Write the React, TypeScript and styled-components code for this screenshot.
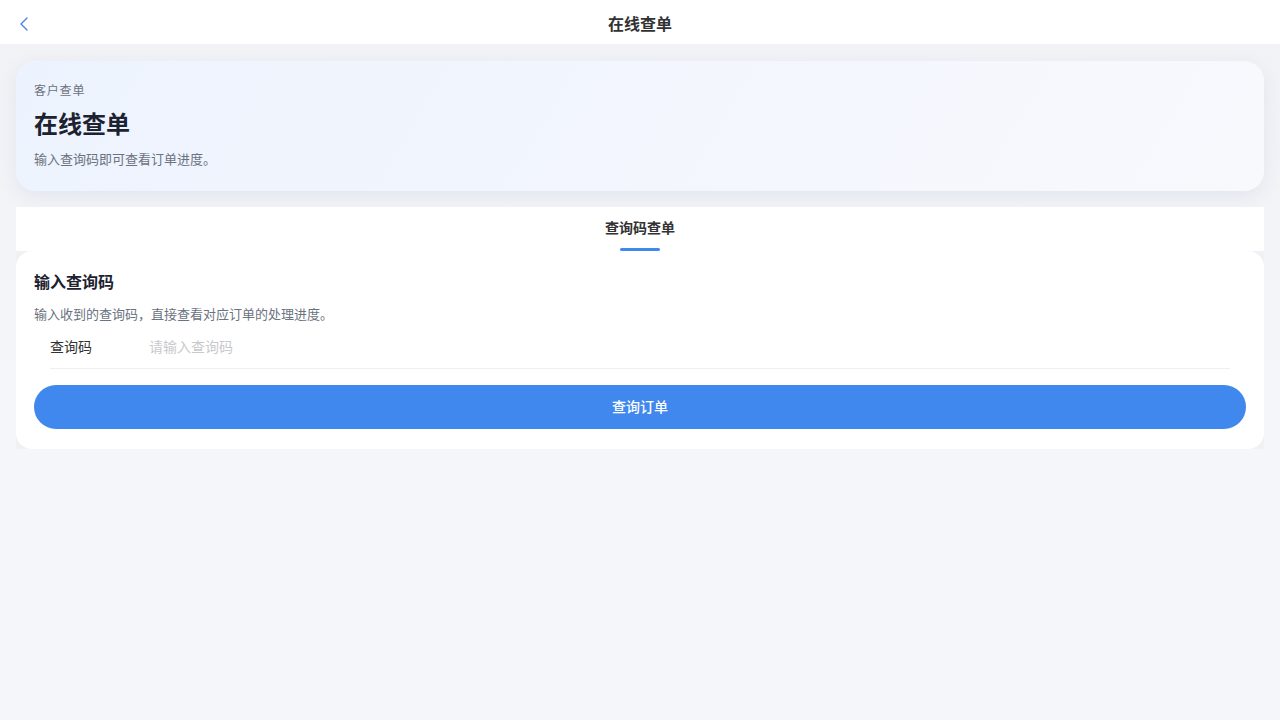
// OrderLookupPage - Customer order lookup by query code

import type React from 'react';
import { useState } from 'react';
import styled, { createGlobalStyle } from 'styled-components';

const colors = {
  primary: '#4088ee',
  textPrimary: '#1c2230',
  textNav: '#323233',
  textSecondary: '#6b7280',
  placeholder: '#c8c9cc',
  border: '#eeeff2',
  pageBg: '#f5f6fa',
};

const GlobalStyle = createGlobalStyle`
	* {
		box-sizing: border-box;
	}

	html,
	body {
		margin: 0;
		padding: 0;
		background: ${colors.pageBg};
		font-family: "Noto Sans CJK SC", "Noto Sans", Inter, sans-serif;
		-webkit-font-smoothing: antialiased;
	}
`;

const Page = styled.div`
	min-height: 720px;
	background: linear-gradient(180deg, #f1f2f6 0%, ${colors.pageBg} 60%);
`;

const NavBar = styled.header`
	position: relative;
	height: 44px;
	padding-top: 2px;
	display: flex;
	align-items: center;
	justify-content: center;
	background: #fff;
`;

const BackButton = styled.button`
	position: absolute;
	left: 18px;
	top: 2px;
	height: 44px;
	display: flex;
	align-items: center;
	padding: 0;
	border: none;
	background: none;
	color: #4b80e6;
	cursor: pointer;
`;

const NavTitle = styled.h1`
	margin: 0;
	font-size: 16px;
	font-weight: 600;
	color: ${colors.textNav};
`;

const Content = styled.main`
	padding: 17px 16px 16px;
	display: flex;
	flex-direction: column;
	gap: 16px;
`;

const HeroCard = styled.section`
	padding: 20px 18px 23px;
	border-radius: 20px;
	background: linear-gradient(120deg, #edf3fe 0%, #f3f6fd 55%, #f7f9fd 100%);
	box-shadow: 0 6px 20px rgba(40, 60, 110, 0.08);
`;

const Eyebrow = styled.div`
	font-size: 12px;
	line-height: 17px;
	letter-spacing: 0.8px;
	color: ${colors.textSecondary};
`;

const HeroTitle = styled.h2`
	margin: 9px 0 0;
	font-size: 24px;
	line-height: 32px;
	font-weight: 700;
	color: ${colors.textPrimary};
`;

const HeroDesc = styled.p`
	margin: 10px 0 0;
	font-size: 13px;
	line-height: 19px;
	color: ${colors.textSecondary};
`;

const Tabs = styled.section`
	background: #f0f1f5;
`;

const TabBar = styled.div`
	height: 44px;
	display: flex;
	background: #fff;
`;

const Tab = styled.button<{ $active: boolean }>`
	position: relative;
	flex: 1;
	border: none;
	background: none;
	padding: 0 0 4px;
	font-family: inherit;
	font-size: 14px;
	font-weight: ${(props) => (props.$active ? 600 : 400)};
	color: ${(props) => (props.$active ? colors.textNav : colors.textSecondary)};
	cursor: pointer;

	&::after {
		content: '';
		display: ${(props) => (props.$active ? 'block' : 'none')};
		position: absolute;
		left: 50%;
		bottom: 0;
		width: 40px;
		height: 3px;
		margin-left: -20px;
		border-radius: 3px;
		background: ${colors.primary};
	}
`;

const FormCard = styled.div`
	padding: 19px 18px 20px;
	border-radius: 16px;
	background: #fff;
`;

const FormTitle = styled.h3`
	margin: 0;
	font-size: 16px;
	line-height: 22px;
	font-weight: 600;
	color: ${colors.textPrimary};
`;

const FormDesc = styled.p`
	margin: 13px 0 2px;
	font-size: 13px;
	line-height: 18px;
	color: ${colors.textSecondary};
`;

const Field = styled.label`
	position: relative;
	display: flex;
	align-items: center;
	padding: 9px 16px 11px;

	&::after {
		content: '';
		position: absolute;
		left: 16px;
		right: 16px;
		bottom: 0;
		border-bottom: 1px solid ${colors.border};
	}
`;

const FieldLabel = styled.span`
	width: 87px;
	margin-right: 12px;
	flex-shrink: 0;
	font-size: 14px;
	line-height: 24px;
	color: ${colors.textNav};
`;

const FieldInput = styled.input`
	flex: 1;
	min-width: 0;
	height: 24px;
	padding: 0;
	border: none;
	outline: none;
	background: transparent;
	font-family: inherit;
	font-size: 14px;
	color: ${colors.textNav};

	&::placeholder {
		color: ${colors.placeholder};
	}
`;

const SubmitButton = styled.button`
	width: 100%;
	height: 44px;
	margin-top: 16px;
	padding: 0 0 2px;
	border: none;
	border-radius: 22px;
	background: ${colors.primary};
	font-family: inherit;
	font-size: 14px;
	font-weight: 500;
	color: #fff;
	cursor: pointer;

	&:active {
		opacity: 0.9;
	}
`;

const BackIcon = () => (
  <svg width="12" height="16" viewBox="0 0 12 16" fill="none" aria-hidden="true">
    <polyline
      points="9,2 3,8 9,14"
      stroke="currentColor"
      strokeWidth="1.4"
      strokeLinecap="round"
      strokeLinejoin="round"
    />
  </svg>
);

const App: React.FC = () => {
  const [code, setCode] = useState('');

  return (
    <>
      <GlobalStyle />
      <Page>
        {/* Nav */}
        <NavBar>
          <BackButton type="button" aria-label="返回">
            <BackIcon />
          </BackButton>
          <NavTitle>在线查单</NavTitle>
        </NavBar>

        <Content>
          {/* Intro */}
          <HeroCard>
            <Eyebrow>客户查单</Eyebrow>
            <HeroTitle>在线查单</HeroTitle>
            <HeroDesc>输入查询码即可查看订单进度。</HeroDesc>
          </HeroCard>

          {/* Lookup form */}
          <Tabs>
            <TabBar>
              <Tab type="button" $active>
                查询码查单
              </Tab>
            </TabBar>
            <FormCard>
              <FormTitle>输入查询码</FormTitle>
              <FormDesc>输入收到的查询码，直接查看对应订单的处理进度。</FormDesc>
              <Field>
                <FieldLabel>查询码</FieldLabel>
                <FieldInput
                  value={code}
                  onChange={(e) => setCode(e.target.value)}
                  placeholder="请输入查询码"
                />
              </Field>
              <SubmitButton type="button">查询订单</SubmitButton>
            </FormCard>
          </Tabs>
        </Content>
      </Page>
    </>
  );
};

export default App;
